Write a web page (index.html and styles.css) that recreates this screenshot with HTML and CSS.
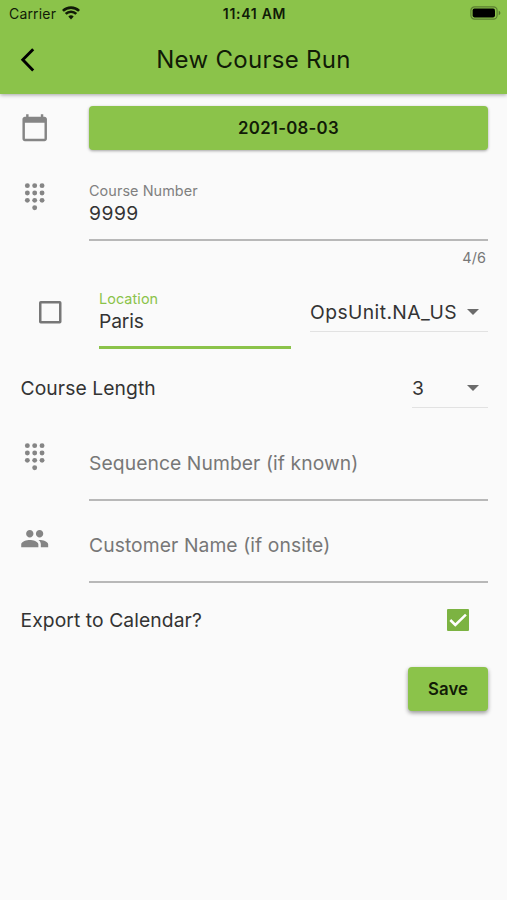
FILE: index.html
```html
<!DOCTYPE html>
<html lang="en">
<head>
<meta charset="utf-8">
<title>New Course Run</title>
<link rel="stylesheet" href="styles.css">
</head>
<body>
<svg class="defs" width="0" height="0">
  <symbol id="dialpad" viewBox="0 0 24 24"><circle cx="6" cy="3" r="2"/><circle cx="12" cy="3" r="2"/><circle cx="18" cy="3" r="2"/><circle cx="6" cy="9" r="2"/><circle cx="12" cy="9" r="2"/><circle cx="18" cy="9" r="2"/><circle cx="6" cy="15" r="2"/><circle cx="12" cy="15" r="2"/><circle cx="18" cy="15" r="2"/><circle cx="12" cy="21" r="2"/></symbol>
</svg>
<header class="top">
  <div class="status">
    <div class="carrier"><span>Carrier</span>
      <svg class="wifi" viewBox="0 0 18 14"><path d="M9 13.400 6.300 10.600a3.800 3.800 0 0 1 5.400 0z"/><path d="M3.700 7.900a7.600 7.600 0 0 1 10.600 0M.9 4.900a11.600 11.600 0 0 1 16.200 0" fill="none" stroke="currentColor" stroke-width="2.700"/></svg>
    </div>
    <span class="clock">11:41 AM</span>
    <svg class="battery" viewBox="0 0 31 14"><rect x=".9" y=".9" width="26.200" height="12.200" rx="3.600" fill="none" stroke="#000" stroke-opacity=".35" stroke-width="1.200"/><rect x="2.600" y="2.600" width="22.400" height="8.800" rx="1.800"/><path d="M28.700 4.800c2.200.7 2.200 3.700 0 4.400z" opacity=".4"/></svg>
  </div>
  <div class="appbar">
    <svg class="back" viewBox="0 0 16 26"><path d="M13.200 2.200 2.800 12.800l10.400 10.600"/></svg>
    <h1 class="title">New Course Run</h1>
  </div>
</header>
<main class="form">
  <section class="row date-row">
    <svg class="icon" viewBox="0 0 24 24"><path d="M20 3h-1V1h-2v2H7V1H5v2H4c-1.100 0-2 .9-2 2v16c0 1.100.9 2 2 2h16c1.100 0 2-.9 2-2V5c0-1.100-.9-2-2-2zm0 18H4V8h16v13z"/></svg>
    <button class="btn date">2021-08-03</button>
  </section>
  <section class="row number-row">
    <svg class="icon"><use href="#dialpad"/></svg>
    <div class="field">
      <label class="label">Course Number</label>
      <div class="value digits">9999</div>
      <div class="counter">4/6</div>
    </div>
  </section>
  <section class="location-row">
    <svg class="checkbox" viewBox="0 0 23 23"><rect x="1.250" y="1.250" width="20" height="20" rx=".5"/></svg>
    <div class="field">
      <label class="label">Location</label>
      <div class="value">Paris</div>
    </div>
    <div class="select unit"><span>OpsUnit.NA_US</span><i class="arrow"></i></div>
  </section>
  <section class="between length-row">
    <span>Course Length</span>
    <div class="select count"><span>3</span><i class="arrow"></i></div>
  </section>
  <section class="row empty-row">
    <svg class="icon"><use href="#dialpad"/></svg>
    <div class="hint">Sequence Number (if known)</div>
  </section>
  <section class="row empty-row">
    <svg class="icon" viewBox="0 0 24 24"><path d="M16 11c1.660 0 2.990-1.340 2.990-3S17.660 5 16 5c-1.660 0-3 1.340-3 3s1.340 3 3 3zm-8 0c1.660 0 2.990-1.340 2.990-3S9.660 5 8 5C6.340 5 5 6.340 5 8s1.340 3 3 3zm0 2c-2.330 0-7 1.170-7 3.500V19h14v-2.500c0-2.330-4.670-3.500-7-3.500zm8 0c-.29 0-.62.02-.97.05 1.160.84 1.970 1.970 1.970 3.450V19h6v-2.500c0-2.330-4.670-3.500-7-3.500z"/></svg>
    <div class="hint">Customer Name (if onsite)</div>
  </section>
  <section class="between export-row">
    <span>Export to Calendar?</span>
    <svg class="checked" viewBox="0 0 22 22"><path d="m3.300 11 5 5L18.900 5.700"/></svg>
  </section>
  <div class="actions"><button class="btn save">Save</button></div>
</main>
</body>
</html>
```

FILE: styles.css
```css
* { box-sizing: border-box; }
body { margin: 0; min-height: 900px; background: #fafafa; color: #333; font-family: Inter, "Liberation Sans", sans-serif; font-size: 19.3px; letter-spacing: .08px; white-space: nowrap; overflow: hidden; }
.defs { position: absolute; }
.top { height: 94px; background: #8bc34a; color: #111b07; box-shadow: 0 1px 4px rgba(0,0,0,.35); }
.status { height: 27px; padding: 0 6px 0 9px; display: grid; grid-template-columns: 1fr auto 1fr; align-items: center; font-size: 14px; }
.carrier { display: flex; align-items: center; gap: 6px; letter-spacing: .17px; }
.wifi { width: 18px; height: 14px; margin-top: -2px; fill: currentColor; }
.clock { font-weight: 600; letter-spacing: .7px; margin-left: -1px; }
.battery { width: 31px; height: 14px; margin-top: -1px; justify-self: end; fill: #000; }
.appbar { height: 66px; display: grid; grid-template-columns: 54px 1fr 54px; align-items: center; }
.back { width: 16px; height: 26px; margin-left: 20px; fill: none; stroke: #000; stroke-width: 2.9; }
.title { margin: 0; text-align: center; font-size: 24px; line-height: 30px; font-weight: 400; letter-spacing: .3px; }
.form { padding: 12px 19px 0 20.5px; }
.row { display: grid; grid-template-columns: 68.5px 1fr; align-items: start; }
.icon { width: 29.4px; height: 29.4px; margin-left: -.3px; fill: #858585; }
.btn { border: 0; padding: 0; height: 44px; border-radius: 4px; background: #8bc34a; color: #111b07; font: 600 16.8px Inter, sans-serif; letter-spacing: .25px; box-shadow: 0 1px 3px rgba(0,0,0,.35); }
.date { width: 100%; }
.date-row { height: 75px; }
.date-row .icon { margin-top: 7px; }
.number-row { height: 102px; }
.number-row .icon { margin-top: 1px; }
.label { display: block; font-size: 14.4px; line-height: 20px; color: #808080; }
.value { height: 40px; line-height: 24px; letter-spacing: -.15px; }
.number-row .value { height: 40px; border-bottom: 2px solid #b8b8b8; letter-spacing: .5px; }
.counter { font-size: 14.4px; line-height: 20px; text-align: right; padding: 7px 2px 0; color: #777; }
.location-row { height: 71px; display: grid; grid-template-columns: 78.5px 192px 1fr; }
.checkbox { width: 23px; height: 23px; margin: 18px 0 0 18px; fill: none; stroke: #777; stroke-width: 2.5; }
.location-row .field { padding-top: 6px; }
.location-row .label { color: #8bc34a; }
.location-row .value { border-bottom: 3px solid #8bc34a; }
.select { display: flex; align-items: center; justify-content: space-between; border-bottom: 1px solid #e2e2e2; padding-right: 9px; height: 39px; }
.arrow { border: 6px solid transparent; border-top-color: #6b6b6b; border-bottom: 0; }
.unit { margin: 10px 0 0 19px; letter-spacing: .42px; }
.between { display: flex; justify-content: space-between; }
.length-row { height: 88px; padding-top: 15px; line-height: 39px; }
.count { width: 76px; }
.empty-row { height: 82px; }
.hint { height: 59px; line-height: 43px; border-bottom: 2px solid #b8b8b8; color: #777; }
.export-row { margin-top: 2px; height: 26px; line-height: 25px; }
.checked { width: 22px; height: 22px; margin: 1px 19px 3px 0; border-radius: 1px; background: #7cb342; fill: none; stroke: #fff; stroke-width: 2.5; }
.actions { display: flex; justify-content: flex-end; margin-top: 33px; }
.save { width: 80px; letter-spacing: .1px; box-shadow: 0 2px 4px rgba(0,0,0,.4); }
```
